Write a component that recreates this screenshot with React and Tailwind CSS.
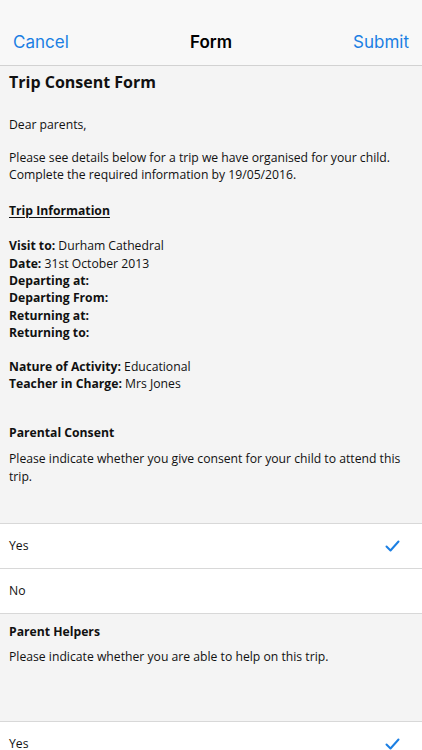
import React from "react";

const body = { fontFamily: '"Open Sans", "Noto Sans", sans-serif' };
const nav = { fontFamily: 'Inter, "Liberation Sans", sans-serif' };

function Check() {
  return (
    <svg width="15" height="12" viewBox="0 0 15 12" fill="none">
      <path d="M1.5 6.5l4 4 8-9" stroke="#1b7fe3" strokeWidth="2" strokeLinecap="round" strokeLinejoin="round" />
    </svg>
  );
}

function Row({ label, checked }) {
  return (
    <div className="h-[45px] bg-white border-b border-[#d8d8d8] flex items-center justify-between pl-[9px] pr-[22px]">
      <span className="text-[12.2px] text-[#111]">{label}</span>
      {checked && <Check />}
    </div>
  );
}

function Field({ label, value }) {
  return (
    <div>
      <span className="font-bold">{label}</span>
      {value ? " " + value : ""}
    </div>
  );
}

export default function App() {
  return (
    <div className="w-[422px] h-[750px] overflow-hidden bg-[#f4f4f4]" style={body}>
      <div className="h-[66px] bg-[#f8f8f8] border-b border-[#d2d2d2] pt-[20px]">
        <div className="h-[45px] flex items-center justify-between px-[13px] text-[17px]" style={nav}>
          <span className="text-[#1b7fe3] w-[80px]">Cancel</span>
          <span className="font-semibold text-black">Form</span>
          <span className="text-[#1b7fe3] w-[80px] text-right">Submit</span>
        </div>
      </div>

      <div className="px-[9px] text-[12.2px] leading-[17.4px] text-[#111]">
        <div className="mt-[4px] text-[16px] leading-[24px] font-bold">Trip Consent Form</div>
        <div className="mt-[22px]">Dear parents,</div>
        <div className="mt-[15.5px]">
          Please see details below for a trip we have organised for your child. Complete the required information by 19/05/2016.
        </div>
        <div className="mt-[18.5px] font-bold underline underline-offset-2">Trip Information</div>
        <div className="mt-[17.5px]">
          <Field label="Visit to:" value="Durham Cathedral" />
          <Field label="Date:" value="31st October 2013" />
          <Field label="Departing at:" />
          <Field label="Departing From:" />
          <Field label="Returning at:" />
          <Field label="Returning to:" />
        </div>
        <div className="mt-[16.5px]">
          <Field label="Nature of Activity:" value="Educational" />
          <Field label="Teacher in Charge:" value="Mrs Jones" />
        </div>
      </div>

      <div className="px-[9px] pt-[31.5px] pb-[38px] border-b border-[#d8d8d8] text-[12.2px] leading-[17.4px] text-[#111]">
        <div className="font-bold">Parental Consent</div>
        <div className="mt-[8.5px] pr-[12px]">Please indicate whether you give consent for your child to attend this trip.</div>
      </div>
      <Row label="Yes" checked />
      <Row label="No" />

      <div className="px-[9px] pt-[9px] pb-[56px] border-b border-[#d8d8d8] text-[12.2px] leading-[17.4px] text-[#111]">
        <div className="font-bold">Parent Helpers</div>
        <div className="mt-[7.5px]">Please indicate whether you are able to help on this trip.</div>
      </div>
      <Row label="Yes" checked />
    </div>
  );
}
